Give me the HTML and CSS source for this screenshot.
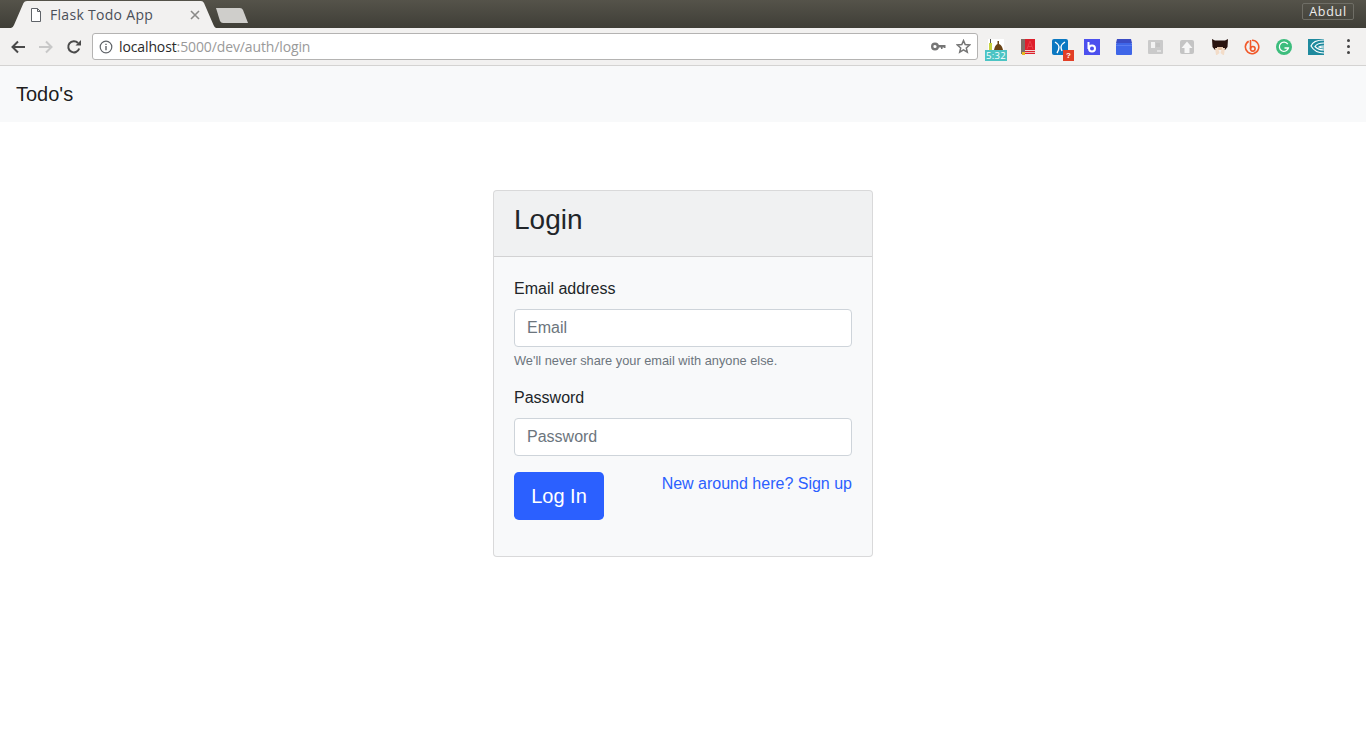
FILE: index.html
```
<!DOCTYPE html>
<html lang="en">
<head>
<meta charset="utf-8">
<title>Flask Todo App</title>
<link rel="stylesheet" href="styles.css">
</head>
<body>
<header class="browser">
  <div class="tabstrip">
    <div class="tab">
      <svg class="tab-shape" width="206" height="28" viewBox="0 0 206 28"><path d="M1 28 Q3 27.5 4 25 L13.5 3 Q14.5 1 17 1 L191 1 Q193 1 194 3 L203.5 25 Q204.5 27.5 206 28 Z" fill="#f2f1f0"/></svg>
      <svg class="tab-file" width="12" height="14" viewBox="0 0 12 14"><path d="M1.5 .5 H7.5 L10.5 3.5 V13.5 H1.5 Z M7.5 .5 V3.5 H10.5" fill="#fff" stroke="#5f6368"/></svg>
      <span class="tab-title">Flask Todo App</span>
      <svg class="tab-close" width="10" height="10" viewBox="0 0 10 10"><path d="M1 1 L9 9 M9 1 L1 9" stroke="#8a8a88" stroke-width="1.6"/></svg>
    </div>
    <svg class="newtab" width="34" height="16" viewBox="0 0 34 16"><path d="M1 0 H25 Q27 0 28 2 L33 15 H8 Q6 15 5 13 Z" fill="#cfcecb"/></svg>
    <div class="profile">Abdul</div>
  </div>
  <div class="toolbar">
    <svg class="nav-icon" width="16" height="16" viewBox="0 0 16 16"><path d="M15 8 H2.5 M8 2.5 L2.5 8 L8 13.5" fill="none" stroke="#4a4a4a" stroke-width="2"/></svg>
    <svg class="nav-icon" width="16" height="16" viewBox="0 0 16 16"><path d="M1 8 H13.5 M8 2.5 L13.5 8 L8 13.5" fill="none" stroke="#c8c8c8" stroke-width="2"/></svg>
    <svg class="nav-icon" width="16" height="16" viewBox="0 0 16 16"><path d="M13.2 9.5 A5.6 5.6 0 1 1 12 4" fill="none" stroke="#4a4a4a" stroke-width="2"/><path d="M9.5 6.5 H15 V1 Z" fill="#4a4a4a"/></svg>
    <div class="omnibox">
      <svg class="info" width="14" height="14" viewBox="0 0 14 14"><circle cx="7" cy="7" r="5.8" fill="none" stroke="#5f6368" stroke-width="1.2"/><path d="M7 6 V10.2 M7 3.8 V5" stroke="#5f6368" stroke-width="1.4"/></svg>
      <span class="url"><span class="url-host">localhost</span>:5000/dev/auth/login</span>
      <svg class="key" width="15" height="9" viewBox="0 0 15 9"><circle cx="4" cy="4.5" r="2.8" fill="none" stroke="#757575" stroke-width="2.4"/><path d="M6.5 3 H14.5 V6 H13 V5.5 H11.5 V7 H10 V5.5 H6.5 Z" fill="#757575"/></svg>
      <svg class="star" width="15" height="15" viewBox="0 0 15 15"><path d="M7.5 1.6 L9.2 5.6 L13.6 6 L10.3 8.9 L11.3 13.2 L7.5 10.9 L3.7 13.2 L4.7 8.9 L1.4 6 L5.8 5.6 Z" fill="none" stroke="#757575" stroke-width="1.5"/></svg>
    </div>
    <div class="extensions">
      <span class="ext">
        <svg width="16" height="12" viewBox="0 0 16 12"><rect width="16" height="12" fill="#fff"/><rect x="1" y="4" width="3" height="8" fill="#c5d23f"/><rect x="2" y="0" width="1" height="4" fill="#555"/><path d="M6 11 Q7 6 9.5 5 V2 H11 V5 Q14 6 15 11 Z" fill="#6b4316"/></svg>
        <span class="badge-time">5:32</span>
      </span>
      <span class="ext"><svg width="16" height="16" viewBox="0 0 16 16"><rect x="1" y="0" width="14" height="15" fill="#de1f2c"/><rect x="1" y="0" width="4" height="15" fill="#7d6f68"/><path d="M7 10 L10 2 L13 10 M8 7.5 H12" fill="none" stroke="#e8404a" stroke-width="1"/><rect x="5" y="11" width="10" height="1" fill="#f2d4d2"/><rect x="5" y="13" width="10" height="1" fill="#e8b8b4"/><rect x="2" y="13" width="3" height="3" fill="#e9b81f"/></svg></span>
      <span class="ext">
        <svg width="16" height="16" viewBox="0 0 16 16"><rect width="16" height="16" rx="2" fill="#0b78c2"/><path d="M3 3 Q6.5 5 7 8 Q7 11 5 14 M13 3 Q9.5 5 9 8 Q9 10 10 12" fill="none" stroke="#fff" stroke-width="1.4"/></svg>
        <span class="badge-q">?</span>
      </span>
      <span class="ext"><svg width="16" height="16" viewBox="0 0 16 16"><rect width="16" height="16" fill="#4c50ee"/><path d="M4.5 3 V10" stroke="#fff" stroke-width="2"/><circle cx="8" cy="9.5" r="3" fill="none" stroke="#fff" stroke-width="2"/></svg></span>
      <span class="ext"><svg width="16" height="16" viewBox="0 0 16 16"><path d="M1 0 H15 L16 4 H0 Z" fill="#3b4cc4"/><rect y="4" width="16" height="12" rx="1" fill="#3f66e8"/><rect y="6" width="16" height="1" fill="#5a7cf0"/></svg></span>
      <span class="ext"><svg width="16" height="16" viewBox="0 0 16 16"><rect y="1" width="15" height="14" rx="1" fill="#cacaca"/><rect x="3" y="3" width="4" height="6" fill="#f2f2f2"/><path d="M9 4 V8 M11 4 V8" stroke="#b8b8b8"/><rect x="9" y="11" width="4" height="2" fill="#e2e2e2"/></svg></span>
      <span class="ext"><svg width="16" height="16" viewBox="0 0 16 16"><rect y="1" width="14" height="14" rx="2" fill="#c4c4c4"/><path d="M7 2.5 L12.5 9 H9.5 V14 H4.5 V9 H1.5 Z" fill="#f6f6f6"/></svg></span>
      <span class="ext"><svg width="16" height="16" viewBox="0 0 16 16"><path d="M0 0 L3 1.5 H13 L16 0 L15.5 8 L13 11 H3 L.5 8 Z" fill="#2a1410"/><path d="M5 8 H11 V11 H5 Z" fill="#e6c4a8"/><path d="M3 9 H6 L7.5 14 L5 16 H4 Z M13 9 H10 L8.5 14 L11 16 H12 Z" fill="#f3dcc8"/></svg></span>
      <span class="ext"><svg width="16" height="16" viewBox="0 0 16 16"><path d="M8 1.3 A6.7 6.7 0 1 1 4.7 2.2" fill="none" stroke="#f1592a" stroke-width="1.6"/><path d="M6.5 1 V10" stroke="#f1592a" stroke-width="1.6"/><circle cx="8.8" cy="9.8" r="2.3" fill="none" stroke="#f1592a" stroke-width="1.6"/></svg></span>
      <span class="ext"><svg width="16" height="16" viewBox="0 0 16 16"><circle cx="8" cy="8" r="8" fill="#3dbd7d"/><path d="M11.8 5.2 A4.6 4.6 0 1 0 12.4 9 H8.5" fill="none" stroke="#fff" stroke-width="1.3"/></svg></span>
      <span class="ext"><svg width="16" height="16" viewBox="0 0 16 16"><rect width="16" height="16" fill="#1f8a9e"/><path d="M16 1 Q5 1 3 7 Q7 14 16 14 M16 4 Q9 4 7 7.5 Q10 11 16 11 M16 7 Q12 7 11 8 Q13 9 16 9" fill="none" stroke="#fff" stroke-width="1.2"/></svg></span>
    </div>
    <div class="menu-dots"><i></i><i></i><i></i></div>
  </div>
</header>
<nav class="navbar"><a class="brand" href="#">Todo's</a></nav>
<main class="main">
  <section class="card">
    <div class="card-header"><h1 class="card-title">Login</h1></div>
    <form class="card-body">
      <div class="form-group">
        <label class="label" for="email">Email address</label>
        <input class="input" id="email" type="email" placeholder="Email">
        <small class="help">We'll never share your email with anyone else.</small>
      </div>
      <div class="form-group">
        <label class="label" for="password">Password</label>
        <input class="input" id="password" type="password" placeholder="Password">
      </div>
      <div class="actions">
        <button class="btn" type="button">Log In</button>
        <a class="signup" href="#">New around here? Sign up</a>
      </div>
    </form>
  </section>
</main>
</body>
</html>
```
FILE: styles.css
```
* { box-sizing: border-box; }
html, body { margin: 0; padding: 0; background: #fff; }
body { font-family: "Liberation Sans", Arial, sans-serif; font-size: 16px; line-height: 1.5; color: #212529; }

.browser { height: 66px; }
.tabstrip { height: 28px; display: flex; align-items: flex-start; position: relative; padding-left: 10px; background: linear-gradient(#55534a, #3f3e37); }
.tab { position: relative; width: 206px; height: 28px; flex: none; }
.tab-shape { position: absolute; left: 0; top: 0; }
.tab-file { position: absolute; left: 20px; top: 8px; }
.tab-title { position: absolute; left: 40px; top: 5px; font: 14px/20px "Open Sans", "Noto Sans", sans-serif; letter-spacing: .3px; color: #4a4f58; white-space: nowrap; }
.tab-close { position: absolute; left: 180px; top: 10px; }
.newtab { margin: 8px 0 0 -1px; flex: none; }
.profile { margin: 3px 12px 0 auto; width: 52px; height: 17px; border: 1px solid #6f6e66; border-radius: 2px; font: 12.5px/15px "Open Sans", sans-serif; letter-spacing: .7px; color: #eee; text-align: center; }

.toolbar { height: 38px; display: flex; align-items: center; padding: 0 0 0 10px; background: #f2f1f0; border-bottom: 1px solid #d4d3d2; }
.nav-icon { flex: none; margin-right: 12px; }
.nav-icon:nth-child(3) { margin-right: 10px; }
.omnibox { flex: none; width: 886px; height: 27px; display: flex; align-items: center; padding: 0 5px 0 6px; background: #fff; border: 1px solid #b4b3b2; border-radius: 3px; }
.info { flex: none; margin-right: 6px; }
.url { flex: 1; font: 14px/20px "Open Sans", "Noto Sans", sans-serif; letter-spacing: -.12px; color: #9a9a9a; white-space: nowrap; }
.url-host { color: #2a2a2a; }
.key { flex: none; margin-right: 10px; }
.star { flex: none; margin-right: 1px; }

.extensions { flex: none; display: flex; margin-left: 10px; }
.ext { width: 16px; height: 16px; margin-right: 16px; flex: none; position: relative; display: block; }
.ext svg { display: block; }
.badge-time { position: absolute; left: -3px; top: 11px; width: 22px; height: 11px; background: #4cc4c4; color: #fff; font: 9.5px/11px "Open Sans", sans-serif; letter-spacing: .3px; text-align: center; }
.badge-q { position: absolute; left: 11px; top: 11px; width: 11px; height: 11px; background: #e23f27; color: #fff; font: bold 8px/11px "Liberation Sans", sans-serif; text-align: center; }
.menu-dots { flex: none; display: flex; flex-direction: column; gap: 3px; margin-left: 7px; }
.menu-dots i { display: block; width: 3px; height: 3px; border-radius: 50%; background: #444; }

.navbar { height: 56px; display: flex; align-items: center; padding: 0 16px; background: #f8f9fa; }
.brand { font-size: 20px; line-height: 30px; color: rgba(0,0,0,.9); text-decoration: none; }

.main { display: flex; justify-content: center; padding-top: 68px; }
.card { width: 380px; background: #f8f9fa; border: 1px solid rgba(0,0,0,.125); border-radius: 4px; overflow: hidden; }
.card-header { height: 66px; padding: 12px 20px; background: rgba(0,0,0,.03); border-bottom: 1px solid rgba(0,0,0,.125); }
.card-title { margin: 0; font-size: 28px; font-weight: 400; line-height: 33.6px; }
.card-body { padding: 20px 20px 36px; }
.form-group { margin-bottom: 16px; }
.label { display: block; margin-bottom: 8px; }
.input { display: block; width: 100%; height: 38px; padding: 6px 12px; font: 16px/24px "Liberation Sans", Arial, sans-serif; color: #495057; background: #fff; border: 1px solid #ced4da; border-radius: 4px; outline: 0; }
.input::placeholder { color: #6c757d; opacity: 1; }
.help { display: block; margin-top: 4px; font-size: 12.8px; line-height: 19.2px; color: #6c757d; }
.actions { display: flex; justify-content: space-between; align-items: flex-start; }
.btn { width: 90px; height: 48px; padding: 8px 16px; font: 20px/30px "Liberation Sans", Arial, sans-serif; color: #fff; background: #2b60ff; border: 0; border-radius: 4.8px; }
.signup { color: #2b60ff; text-decoration: none; }
```
